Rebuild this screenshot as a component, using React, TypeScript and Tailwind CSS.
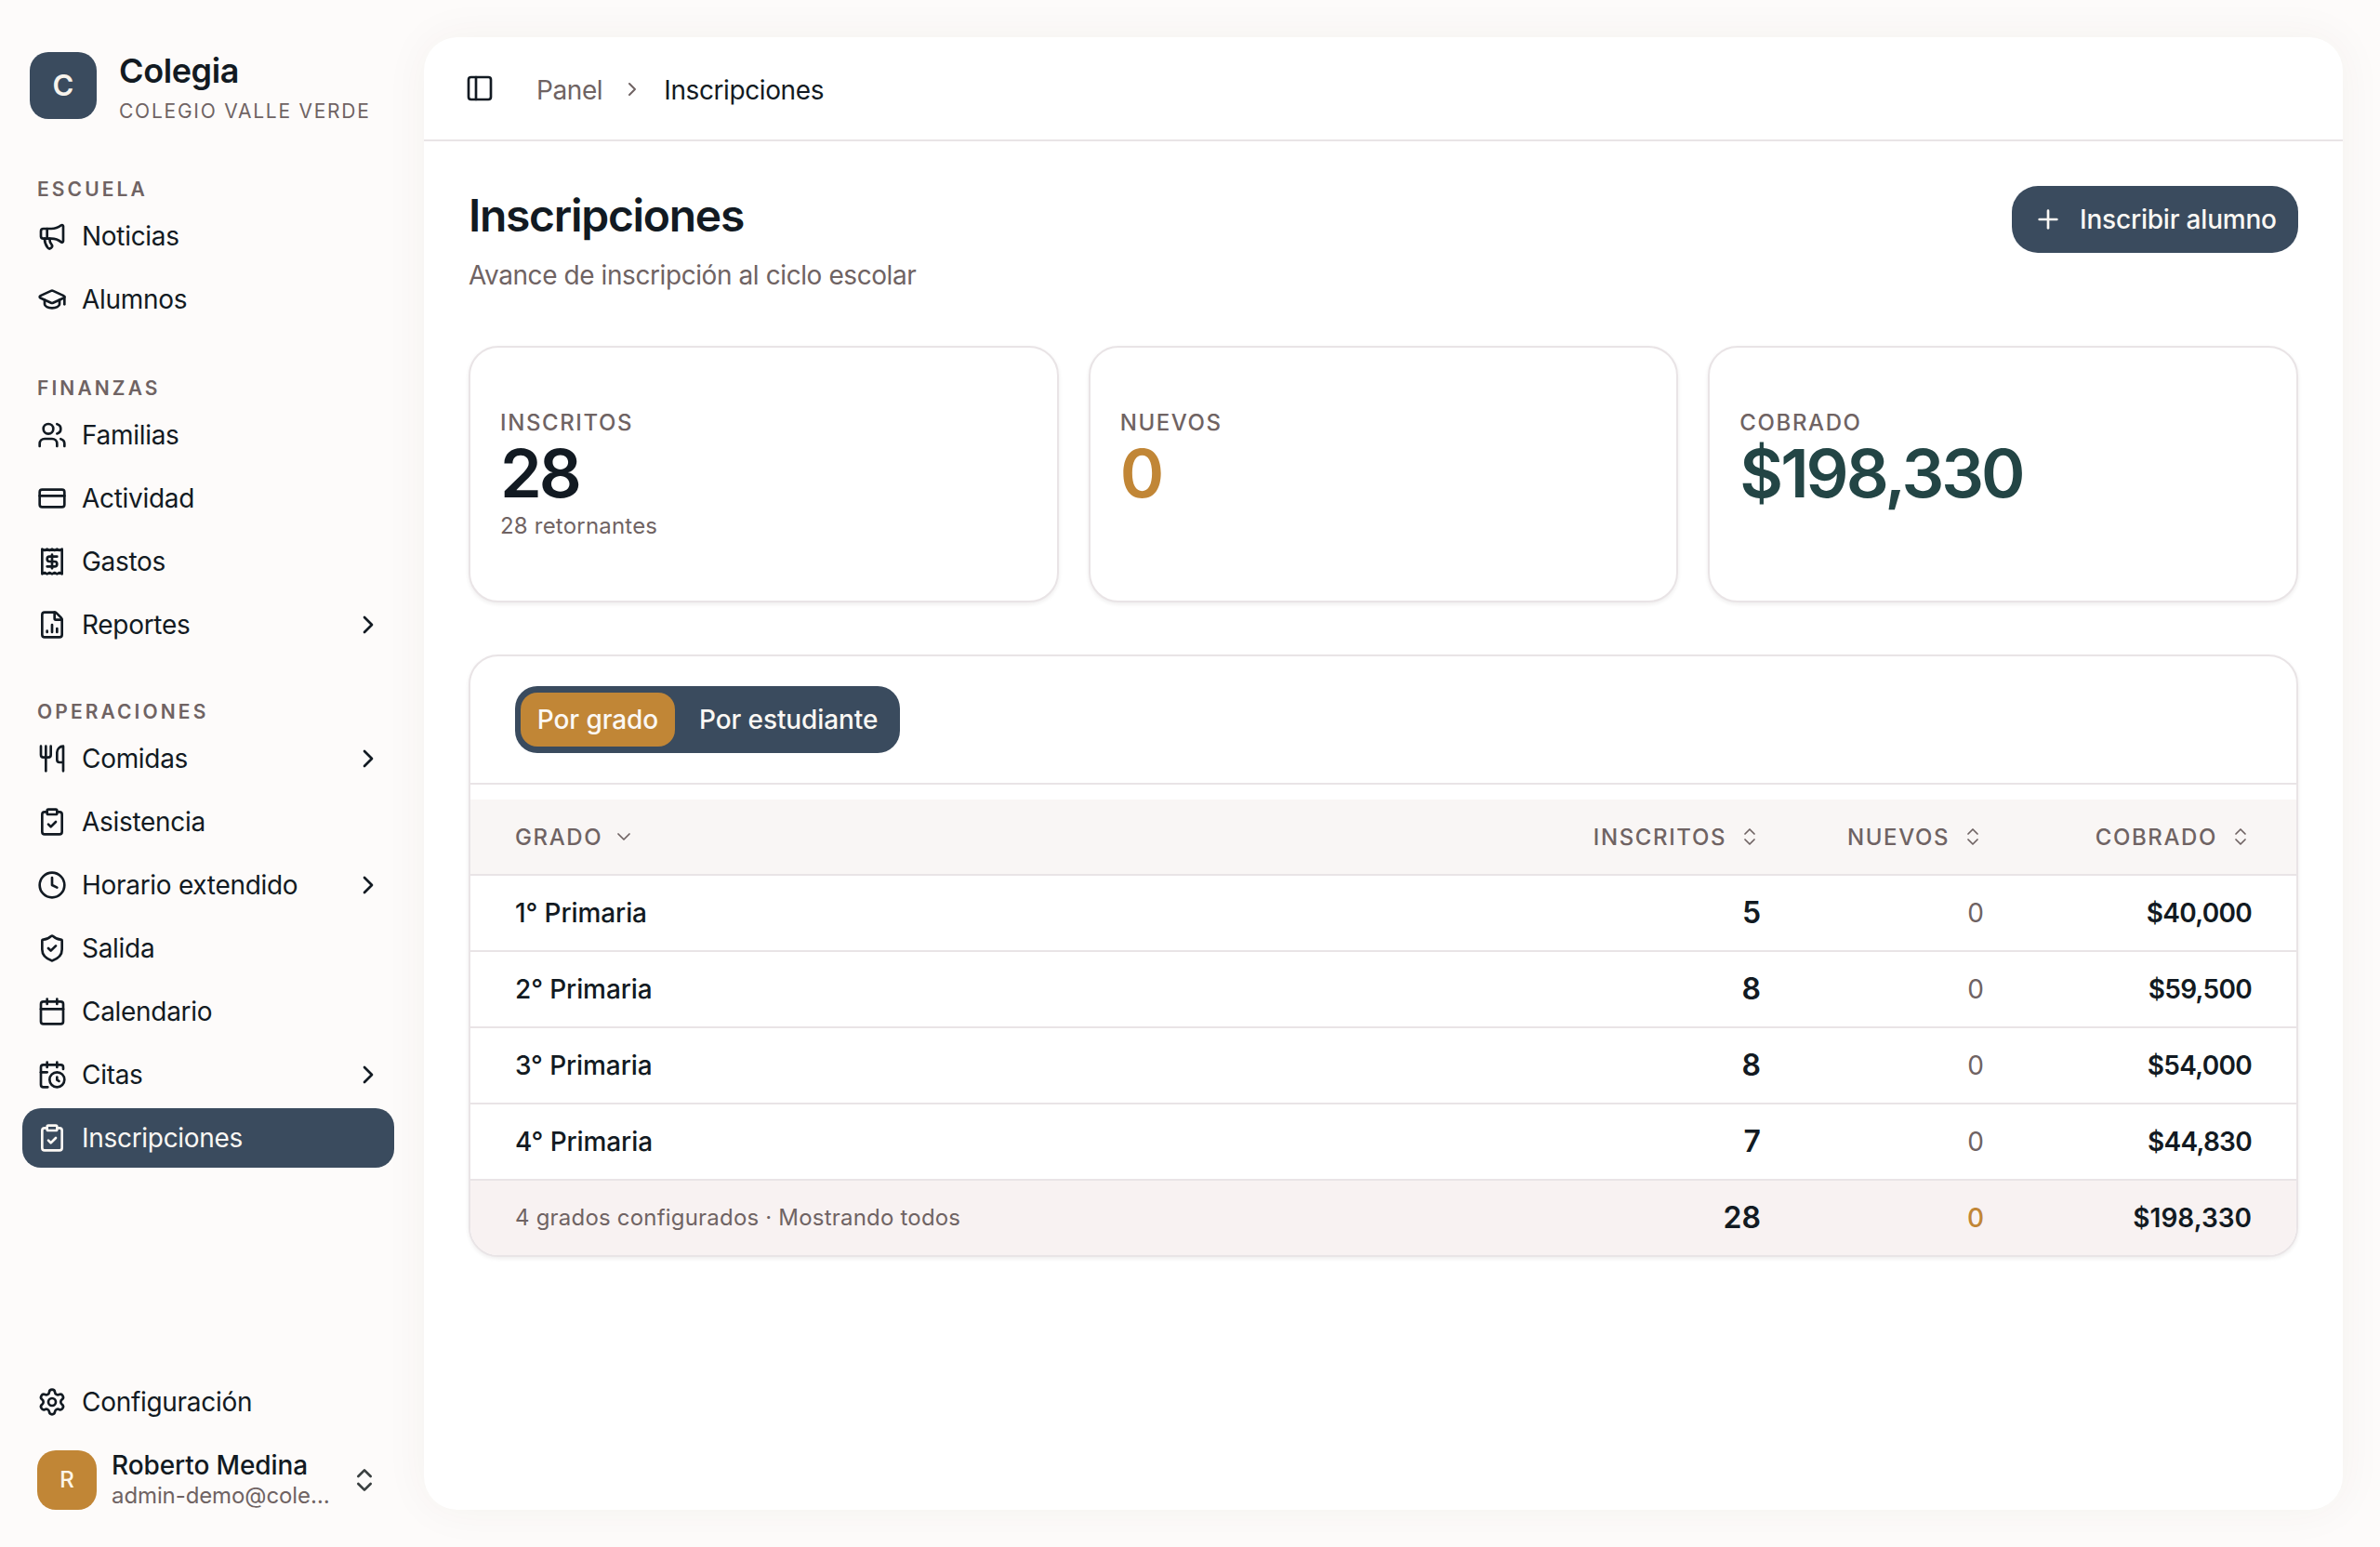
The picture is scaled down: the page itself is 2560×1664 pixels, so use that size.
import React from "react";
import {
  Megaphone, GraduationCap, Users, CreditCard, Receipt, FileChartColumn, Utensils, ClipboardCheck,
  Clock, ShieldCheck, Calendar, CalendarClock, Settings, ChevronRight, ChevronsUpDown, PanelLeft, Plus, ChevronDown,
} from "lucide-react";

type Item = { label: string; icon: React.ComponentType<{ size?: number; className?: string }>; more?: boolean; active?: boolean };

function NavItem({ label, icon: Icon, more, active }: Item) {
  return (
    <div className={"flex h-[64px] items-center gap-[16px] rounded-[20px] pr-[12px] pl-[16px] text-[28px] tracking-[-0.3px] " + (active ? "bg-[#3a4b5e] text-[#fbf8f4]" : "text-[#121a22]")}>
      <Icon size={32} className="shrink-0" />
      <span className="flex-1">{label}</span>
      {more && <ChevronRight size={32} className="shrink-0" />}
    </div>
  );
}

function Section({ title, items, margin }: { title: string; items: Item[]; margin: string }) {
  return (
    <div className={margin}>
      <div className="mb-[4px] flex h-[32px] items-center px-[16px] pt-[3px] text-[21px] font-semibold tracking-[3.1px] text-[#6f6363]">{title}</div>
      <div className="flex flex-col gap-[4px]">
        {items.map((it) => <NavItem key={it.label} {...it} />)}
      </div>
    </div>
  );
}

function Stat({ label, value, sub, color }: { label: string; value: string; sub?: string; color: string }) {
  return (
    <div className="flex h-[276px] flex-col rounded-[32px] border-2 border-[#e9e4e6] bg-white px-[32px] pt-[65px] shadow-[0_2px_4px_rgba(40,30,30,0.08)]">
      <div className="h-[32px] text-[24px] leading-[32px] font-medium tracking-[1.6px] text-[#6f6363]">{label}</div>
      <div className={"mt-[2px] h-[72px] text-[72px] leading-[72px] font-semibold tracking-[-3px] " + color}>{value}</div>
      {sub && <div className="mt-[5px] text-[24px] leading-[32px] tracking-[0.2px] text-[#6f6363]">{sub}</div>}
    </div>
  );
}

const gridCols = "grid grid-cols-[1fr_280px_240px_288px] items-center px-[48px]";

function SortHead({ label }: { label: string }) {
  return (
    <div className="flex items-center justify-end gap-[13px]">
      <span className="mt-[2px]">{label}</span>
      <ChevronsUpDown size={24} strokeWidth={1.75} />
    </div>
  );
}

const rows = [
  { g: "1° Primaria", i: "5", c: "$40,000" },
  { g: "2° Primaria", i: "8", c: "$59,500" },
  { g: "3° Primaria", i: "8", c: "$54,000" },
  { g: "4° Primaria", i: "7", c: "$44,830" },
];

export default function App() {
  return (
    <div className="flex h-[1664px] w-[2560px] overflow-hidden bg-[#fdfbfa] font-[Inter,sans-serif] text-[#121a22]">
      <aside className="flex w-[456px] shrink-0 flex-col pt-[56px] pr-[32px] pb-[40px] pl-[24px]">
        <div className="flex items-start gap-[24px] pl-[8px]">
          <div className="flex h-[72px] w-[72px] items-center justify-center rounded-[20px] bg-[#3a4b5e] text-[31px] font-semibold text-[#f7f3ec]">C</div>
          <div className="flex flex-col">
            <div className="text-[36px] leading-[40px] font-semibold tracking-[-0.4px] text-[#121a22]">Colegia</div>
            <div className="mt-[8px] text-[21px] leading-[32px] tracking-[1.75px] whitespace-nowrap text-[#6f6363]">COLEGIO VALLE VERDE</div>
          </div>
        </div>
        <Section margin="mt-[50px]" title="ESCUELA" items={[{ label: "Noticias", icon: Megaphone }, { label: "Alumnos", icon: GraduationCap }]} />
        <Section margin="mt-[46px]" title="FINANZAS" items={[
          { label: "Familias", icon: Users },
          { label: "Actividad", icon: CreditCard },
          { label: "Gastos", icon: Receipt },
          { label: "Reportes", icon: FileChartColumn, more: true },
        ]} />
        <Section margin="mt-[44px]" title="OPERACIONES" items={[
          { label: "Comidas", icon: Utensils, more: true },
          { label: "Asistencia", icon: ClipboardCheck },
          { label: "Horario extendido", icon: Clock, more: true },
          { label: "Salida", icon: ShieldCheck },
          { label: "Calendario", icon: Calendar },
          { label: "Citas", icon: CalendarClock, more: true },
          { label: "Inscripciones", icon: ClipboardCheck, active: true },
        ]} />
        <div className="flex-1" />
        <NavItem label="Configuración" icon={Settings} />
        <div className="mt-[20px] flex h-[64px] items-center pl-[16px]">
          <div className="flex h-[64px] w-[64px] shrink-0 items-center justify-center rounded-[20px] bg-[#c18636] text-[24px] font-medium text-[#fdf6ea]">R</div>
          <div className="ml-[16px] flex w-[238px] flex-col">
            <div className="text-[28px] leading-[32px] font-medium tracking-[-0.1px] text-[#121a22]">Roberto Medina</div>
            <div className="mt-[2px] truncate text-[24px] leading-[30px] tracking-[-0.1px] text-[#6f6363]">admin-demo@colegia.mx</div>
          </div>
          <ChevronsUpDown size={32} className="ml-[18px] shrink-0 text-[#3a4040]" />
        </div>
      </aside>

      <main className="mt-[40px] mb-[40px] flex h-[1584px] w-[2064px] flex-col rounded-[36px] bg-white shadow-[0_0_48px_rgba(70,50,40,0.05)]">
        <header className="flex h-[112px] shrink-0 items-center border-b-2 border-[#e9e4e6] pl-[44px] text-[28px] tracking-[-0.4px]">
          <PanelLeft size={32} />
          <span className="mt-[3px] ml-[45px] text-[#6f6363]">Panel</span>
          <ChevronRight size={24} className="mt-[2px] mr-[22px] ml-[20px] text-[#6f6363]" />
          <span className="mt-[3px]">Inscripciones</span>
        </header>
        <div className="flex flex-col px-[48px] pt-[48px]">
          <div className="flex items-start justify-between">
            <div>
              <h1 className="text-[48px] leading-[64px] font-semibold tracking-[-1.3px]">Inscripciones</h1>
              <p className="mt-[12px] text-[28px] leading-[40px] tracking-[-0.42px] text-[#6f6363]">Avance de inscripción al ciclo escolar</p>
            </div>
            <button className="flex h-[72px] w-[308px] items-center gap-[18px] rounded-[28px] bg-[#3a4b5e] pl-[23px] text-[28px] font-medium tracking-[-0.2px] text-[#fbf8f4]">
              <Plus size={32} />
              Inscribir alumno
            </button>
          </div>

          <div className="mt-[56px] grid grid-cols-3 gap-[32px]">
            <Stat label="INSCRITOS" value="28" sub="28 retornantes" color="text-[#121a22]" />
            <Stat label="NUEVOS" value="0" color="text-[#c18636]" />
            <Stat label="COBRADO" value="$198,330" color="text-[#234545]" />
          </div>

          <section className="mt-[56px] overflow-hidden rounded-[32px] border-2 border-[#e9e4e6] bg-white shadow-[0_2px_4px_rgba(40,30,30,0.08)]">
            <div className="border-b-2 border-[#e9e4e6] px-[48px] pt-[32px] pb-[32px]">
              <div className="flex h-[72px] w-[414px] items-center rounded-[24px] bg-[#3a4b5e] px-[6px] text-[28px] font-medium tracking-[-0.1px] text-[#fbf8f4]">
                <div className="flex h-[58px] w-[166px] items-center justify-center rounded-[18px] bg-[#c18636]">Por grado</div>
                <div className="ml-[26px]">Por estudiante</div>
              </div>
            </div>
            <div className={gridCols + " mt-[16px] h-[82px] border-b-2 border-[#e9e4e6] bg-[#f9f6f5] text-[24px] font-medium tracking-[1.6px] text-[#6f6363]"}>
              <div className="flex items-center gap-[11px]"><span className="mt-[2px]">GRADO</span><ChevronDown size={24} strokeWidth={1.75} /></div>
              <SortHead label="INSCRITOS" />
              <SortHead label="NUEVOS" />
              <SortHead label="COBRADO" />
            </div>
            {rows.map((r) => (
              <div key={r.g} className={gridCols + " h-[82px] border-b-2 border-[#e9e4e6]"}>
                <div className="text-[28px] font-medium tracking-[-0.1px]">{r.g}</div>
                <div className="text-right text-[32px] font-semibold">{r.i}</div>
                <div className="text-right text-[28px] text-[#6f6363]">0</div>
                <div className="text-right text-[28px] font-semibold tracking-[-0.7px]">{r.c}</div>
              </div>
            ))}
            <div className={gridCols + " h-[80px] bg-[#f8f2f2]"}>
              <div className="text-[24px] tracking-[0.2px] text-[#6f6363]">4 grados configurados · Mostrando todos</div>
              <div className="text-right text-[32px] font-semibold">28</div>
              <div className="text-right text-[28px] font-medium text-[#c18636]">0</div>
              <div className="text-right text-[28px] font-semibold">$198,330</div>
            </div>
          </section>
        </div>
      </main>
    </div>
  );
}
